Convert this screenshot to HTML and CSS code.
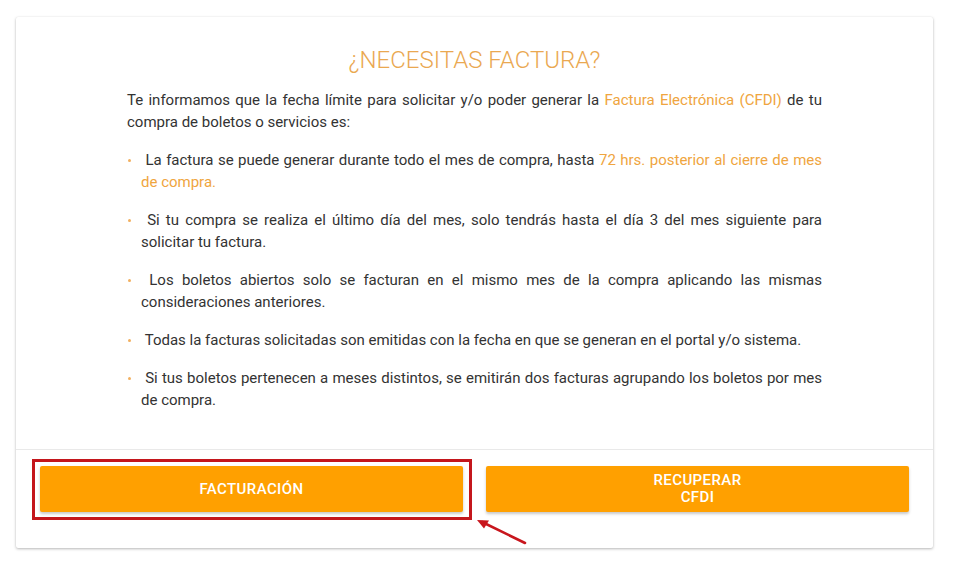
FILE: index.html
```html
<!DOCTYPE html>
<html lang="es">
<head>
<meta charset="utf-8">
<title>¿Necesitas factura?</title>
<link rel="stylesheet" href="styles.css">
</head>
<body>
<div class="page">
  <div class="card">
    <div class="card-body">
      <h2 class="title">¿NECESITAS FACTURA?</h2>
      <div class="content">
        <p>Te informamos que la fecha límite para solicitar y/o poder generar la <span class="hl">Factura Electrónica (CFDI)</span> de tu compra de boletos o servicios es:</p>
        <ul class="list">
          <li>&nbsp;La factura se puede generar durante todo el mes de compra, hasta <span class="hl">72 hrs. posterior al cierre de mes de compra.</span></li>
          <li>&nbsp;Si tu compra se realiza el último día del mes, solo tendrás hasta el día 3 del mes siguiente para solicitar tu factura.</li>
          <li>&nbsp;Los boletos abiertos solo se facturan en el mismo mes de la compra aplicando las mismas consideraciones anteriores.</li>
          <li>&nbsp;Todas la facturas solicitadas son emitidas con la fecha en que se generan en el portal y/o sistema.</li>
          <li>&nbsp;Si tus boletos pertenecen a meses distintos, se emitirán dos facturas agrupando los boletos por mes de compra.</li>
        </ul>
      </div>
    </div>
    <div class="card-actions">
      <div class="btn-wrap">
        <button class="btn">FACTURACIÓN</button>
        <span class="highlight-box"></span>
        <svg class="arrow" width="60" height="34" viewBox="0 0 60 34">
          <line x1="53" y1="30" x2="10" y2="9" stroke="#c8161d" stroke-width="2.6" stroke-linecap="round"/>
          <polygon points="5,7 17,7.5 12,15.5" fill="#c8161d"/>
        </svg>
      </div>
      <div class="btn-wrap">
        <button class="btn">RECUPERAR<br>CFDI</button>
      </div>
    </div>
  </div>
</div>
</body>
</html>
```

FILE: styles.css
```css
html, body {
  margin: 0;
  padding: 0;
  background: #ffffff;
}

body {
  font-family: Roboto, "Liberation Sans", Arial, sans-serif;
  color: #333333;
}

.page {
  padding: 17px 25px 20px 16px;
}

.card {
  background: #ffffff;
  box-shadow: 0 1px 3px rgba(0, 0, 0, 0.28), 0 0 1px rgba(0, 0, 0, 0.08);
  border-radius: 2px;
}

.card-body {
  padding: 29px 0 38px;
}

.title {
  margin: 0 0 15px;
  text-align: center;
  font-size: 24px;
  line-height: 28px;
  font-weight: 300;
  color: #eaa851;
}

.content {
  width: 695px;
  margin: 0 auto;
  font-size: 15px;
  line-height: 22px;
  text-align: justify;
}

.content p {
  margin: 0 0 16px;
}

.hl {
  color: #efa540;
}

.list {
  list-style: none;
  margin: 0;
  padding: 0;
}

.list li {
  position: relative;
  padding-left: 14px;
  margin-bottom: 16px;
}

.list li:last-child {
  margin-bottom: 0;
}

.list li::before {
  content: "";
  position: absolute;
  left: 1px;
  top: 10px;
  width: 3px;
  height: 3px;
  border-radius: 50%;
  background: #f2b060;
}

.card-actions {
  border-top: 1px solid #e9e9e9;
  padding: 16px 24px 36px;
  display: grid;
  grid-template-columns: 1fr 1fr;
  column-gap: 23px;
}

.btn-wrap {
  position: relative;
}

.btn {
  display: block;
  width: 100%;
  height: 46px;
  border: none;
  border-radius: 2px;
  background: #ffa000;
  color: #ffffff;
  font-family: Roboto, "Liberation Sans", Arial, sans-serif;
  font-size: 15px;
  font-weight: 500;
  letter-spacing: 0.4px;
  line-height: 17px;
  box-shadow: 0 2px 3px rgba(0, 0, 0, 0.22);
  padding: 0;
}

.highlight-box {
  position: absolute;
  left: -8px;
  top: -7px;
  right: -9px;
  bottom: -8px;
  border: 3px solid #c4161c;
  pointer-events: none;
}

.arrow {
  position: absolute;
  left: 432px;
  top: 47px;
  overflow: visible;
}
```
